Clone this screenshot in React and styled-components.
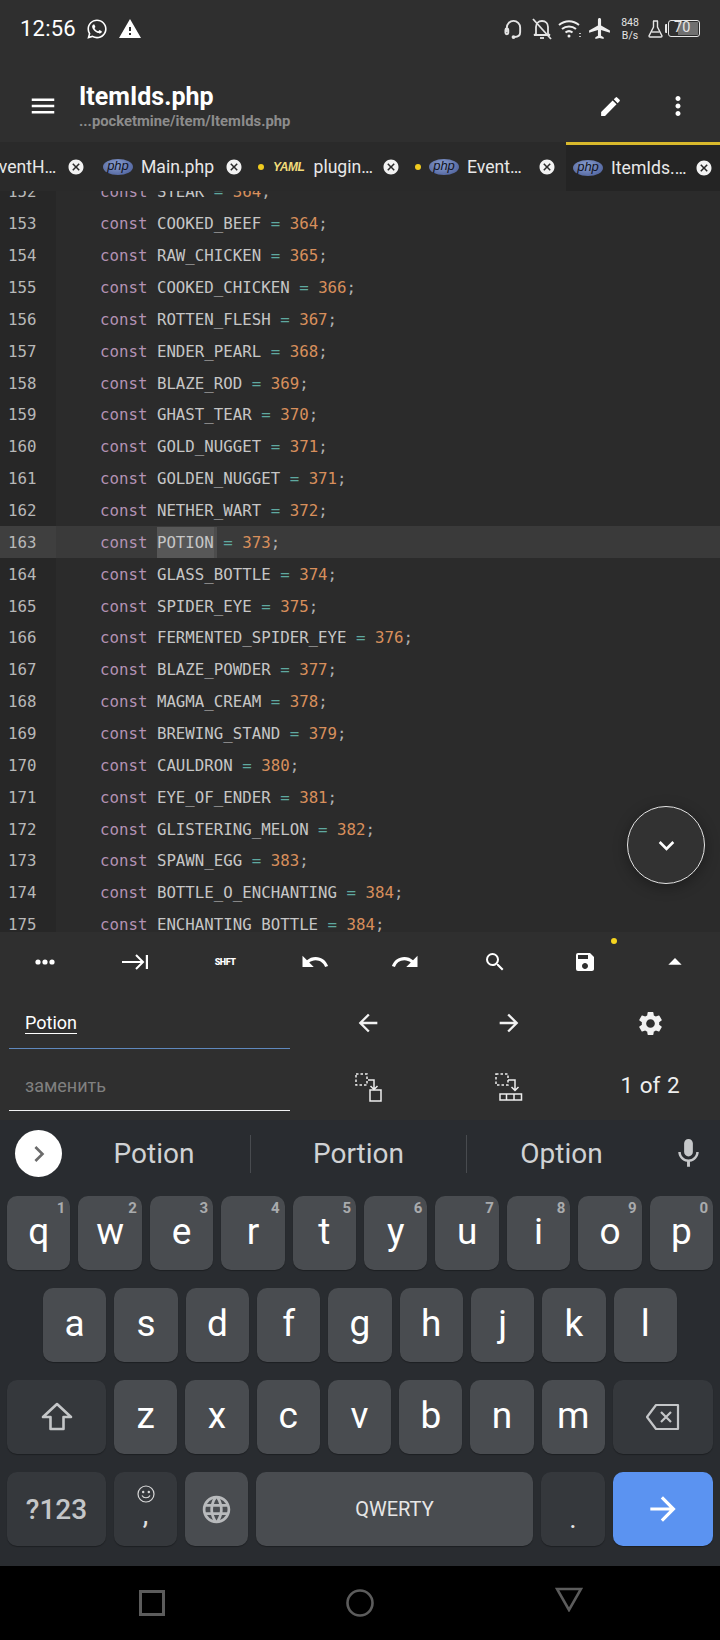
import React from "react";
import styled, { createGlobalStyle } from "styled-components";
import {
  MdMenu,
  MdEdit,
  MdMoreVert,
  MdUndo,
  MdRedo,
  MdSearch,
  MdSave,
  MdArrowDropUp,
  MdSettings,
  MdArrowBack,
  MdArrowForward,
  MdKeyboardArrowDown,
  MdKeyboardArrowRight,
  MdMic,
  MdLanguage,
  MdWarning,
  MdAirplanemodeActive,
  MdCancel,
} from "react-icons/md";
import { FaWhatsapp } from "react-icons/fa";

const GlobalStyle = createGlobalStyle`
  html, body {
    margin: 0;
    padding: 0;
    background: #2f2f2f;
  }
  * {
    box-sizing: border-box;
  }
`;

const Page = styled.div`
  position: relative;
  width: 720px;
  height: 1640px;
  overflow: hidden;
  display: flex;
  flex-direction: column;
  background: #2f2f2f;
  font-family: Roboto, sans-serif;
  color: #fff;
`;

const StatusBar = styled.div`
  height: 60px;
  display: flex;
  align-items: center;
  padding: 0 20px 3px 20px;
`;

const Time = styled.span`
  font-size: 22px;
  letter-spacing: 0.2px;
  margin-right: 10px;
`;

const AlertIcon = styled(MdWarning)`
  margin-left: 10px;
  font-size: 24px;
`;

const StatusRight = styled.div`
  margin-left: auto;
  display: flex;
  align-items: center;
`;

const StatusGlyph = styled.span`
  display: flex;
  margin-right: ${(p) => p.$after}px;
`;

const Speed = styled.div`
  width: 30px;
  margin: 0 3px;
  font-size: 10.5px;
  line-height: 13px;
  text-align: center;
  color: #e4e4e4;
`;

const Battery = styled.div`
  position: relative;
  width: 32px;
  height: 17px;
  margin-left: 1px;
  border: 1.5px solid #e6e6e6;
  border-radius: 3px;
  display: flex;
  justify-content: flex-end;
  padding: 1px;
`;

const BatteryFill = styled.div`
  width: 70%;
  background: #707070;
`;

const BatteryText = styled.span`
  position: absolute;
  left: 5px;
  top: -1px;
  font-size: 14.5px;
  line-height: 16px;
  color: #e6e6e6;
`;

const BatteryCap = styled.div`
  width: 2px;
  height: 9px;
  margin-left: 2px;
  background: #e6e6e6;
  border-radius: 1px 0 0 1px;
`;

const AppBar = styled.div`
  height: 82px;
  display: flex;
  align-items: center;
  padding: 10px 0 0 28px;
`;

const TitleBlock = styled.div`
  margin-left: 21px;
  display: flex;
  flex-direction: column;
`;

const Title = styled.div`
  font-size: 25px;
  font-weight: 700;
  line-height: 30px;
`;

const Path = styled.div`
  font-size: 14.8px;
  font-weight: 700;
  line-height: 18px;
  color: #8c8c8c;
`;

const AppActions = styled.div`
  margin-left: auto;
  display: flex;
  align-items: center;
  gap: 40px;
  padding-right: 27px;
`;

const TabStrip = styled.div`
  height: 49px;
  display: flex;
  background: #2a2a2a;
  overflow: hidden;
`;

const Tab = styled.div`
  flex: 0 0 ${(p) => p.$width}px;
  margin-left: ${(p) => p.$shift || 0}px;
  display: flex;
  align-items: center;
  gap: ${(p) => p.$gap || 8}px;
  padding-left: ${(p) => p.$left || 0}px;
  padding-right: ${(p) => p.$right || 5}px;
  background: ${(p) => (p.$active ? "#242424" : "transparent")};
  border-top: ${(p) => (p.$active ? "3px solid #d9b92c" : "none")};
`;

const TabName = styled.span`
  font-size: 17.6px;
  color: #e8e8e8;
  white-space: nowrap;
`;

const TabClose = styled(MdCancel)`
  margin-left: auto;
  font-size: 18px;
  color: #f2f2f2;
  flex-shrink: 0;
`;

const UnsavedDot = styled.span`
  width: 6px;
  height: 6px;
  border-radius: 50%;
  background: #f0cb1f;
  flex-shrink: 0;
`;

const PhpLogo = styled.span`
  width: 30px;
  height: 16px;
  border-radius: 50%;
  background: radial-gradient(ellipse at 45% 35%, #8a9fd0, #52659f 80%);
  color: #10121c;
  font: italic 400 13px/14px "Liberation Sans", sans-serif;
  text-align: center;
  flex-shrink: 0;
`;

const YamlLogo = styled.span`
  font: italic 700 12px/14px "Liberation Sans", sans-serif;
  letter-spacing: -0.4px;
  color: #f1dc7a;
  flex-shrink: 0;
`;

const CodeArea = styled.div`
  height: 741px;
  overflow: hidden;
  background: #2b2b2b;
  font-family: "DejaVu Sans Mono", monospace;
  font-size: 15.75px;
`;

const CodeLines = styled.div`
  margin-top: -15px;
`;

const Line = styled.div`
  height: 31.86px;
  display: flex;
  align-items: center;
  white-space: pre;
  background: ${(p) => (p.$current ? "#3a3a3a" : "transparent")};
`;

const LineNumber = styled.span`
  width: 56px;
  align-self: stretch;
  display: flex;
  align-items: center;
  padding-left: 8px;
  margin-right: 44px;
  color: #b8b8b8;
  background: ${(p) => (p.$current ? "#3f3f3f" : "#272727")};
`;

const Keyword = styled.span`
  color: #b492b4;
`;

const Name = styled.span`
  color: #c6c6c6;
`;

const Selected = styled.span`
  background: #575757;
  color: #c6c6c6;
  padding: 6px 0;
  box-shadow: 3px 0 0 #4c4c4c;
`;

const Op = styled.span`
  color: #5fa9a0;
`;

const Num = styled.span`
  color: #d88f5c;
`;

const Semi = styled.span`
  color: #b0b0b0;
`;

const ScrollButton = styled.div`
  position: absolute;
  left: 627px;
  top: 806px;
  width: 78px;
  height: 78px;
  border-radius: 50%;
  border: 1.5px solid #e4e4e4;
  background: #323232;
  box-shadow: 0 3px 14px rgba(0, 0, 0, 0.35);
  display: flex;
  align-items: center;
  justify-content: center;
  font-size: 31px;
`;

const ToolRow = styled.div`
  height: 60px;
  display: grid;
  grid-template-columns: repeat(8, 90px);
  background: #2f2f2f;
`;

const ToolCell = styled.div`
  position: relative;
  display: flex;
  align-items: center;
  justify-content: center;
  font-size: ${(p) => p.$size || 24}px;
  color: #fff;
`;

const ShiftLabel = styled.span`
  font-size: 9px;
  font-weight: 900;
  letter-spacing: -0.5px;
`;

const SaveDot = styled.span`
  position: absolute;
  right: 13px;
  top: 6px;
  width: 6px;
  height: 6px;
  border-radius: 50%;
  background: #f5d41f;
`;

const FindPanel = styled.div`
  height: 128px;
  display: grid;
  grid-template-columns: 298px 140px 142px 140px;
  grid-auto-rows: 62px;
`;

const FieldCell = styled.div`
  padding: 0 8px 0 9px;
`;

const Field = styled.div`
  height: 57px;
  padding: 6px 0 0 16px;
  display: flex;
  align-items: center;
  font-size: 18px;
  border-bottom: 1px solid ${(p) => (p.$focused ? "#5f88bd" : "#f2f2f2")};
  color: ${(p) => (p.$focused ? "#fff" : "#808080")};
`;

const TypedWord = styled.span`
  border-bottom: 1px solid #fff;
  line-height: 21px;
`;

const PanelCell = styled.div`
  display: flex;
  align-items: center;
  justify-content: center;
  font-size: ${(p) => p.$size || 24}px;
  padding-top: ${(p) => p.$drop || 0}px;
  color: #f2f2f2;
`;

const MatchCount = styled.span`
  font-size: 22.5px;
  word-spacing: 1px;
  color: #eee;
`;

const Keyboard = styled.div`
  height: 446px;
  background: #292c30;
  display: flex;
  flex-direction: column;
`;

const Suggestions = styled.div`
  height: 76px;
  padding-bottom: 9px;
  display: grid;
  grid-template-columns: 58px 192px 216px 190px 64px;
  align-items: center;
`;

const ExpandButton = styled.div`
  width: 47px;
  height: 47px;
  margin-left: 15px;
  border-radius: 50%;
  background: #fff;
  color: #6b6b6b;
  display: flex;
  align-items: center;
  justify-content: center;
  font-size: 32px;
`;

const Suggestion = styled.div`
  height: 38px;
  display: flex;
  align-items: center;
  justify-content: center;
  font-size: 28px;
  color: #d0d2d4;
  border-left: ${(p) => (p.$divided ? "1px solid #484b4f" : "none")};
`;

const MicCell = styled.div`
  display: flex;
  justify-content: center;
  font-size: 35px;
  color: #c6c8ca;
`;

const KeyRows = styled.div`
  display: flex;
  flex-direction: column;
  gap: 18px;
`;

const KeyRow = styled.div`
  height: 74px;
  display: flex;
  gap: 8px;
  padding: 0 ${(p) => p.$inset || 7}px;
`;

const Key = styled.div`
  position: relative;
  flex: ${(p) => (p.$wide ? `0 0 ${p.$wide}px` : "1 1 0")};
  border-radius: 10px;
  background: ${(p) => (p.$tone === "dark" ? "#35383c" : p.$tone === "blue" ? "#5b93f1" : "#494c50")};
  box-shadow: 0 1px 1px rgba(0, 0, 0, 0.3);
  display: flex;
  align-items: center;
  justify-content: center;
  font-size: 37px;
  color: #fff;
  padding-bottom: ${(p) => p.$lift || 0}px;
`;

const KeyHint = styled.span`
  position: absolute;
  right: 5px;
  top: 3px;
  font-size: 15px;
  font-weight: 700;
  color: #a9abad;
`;

const SymbolLabel = styled.span`
  font-size: 28px;
  font-weight: 500;
  color: #c4c6c8;
`;

const SpaceLabel = styled.span`
  font-size: 20px;
  color: #e6e6e6;
`;

const CommaStack = styled.div`
  display: flex;
  flex-direction: column;
  align-items: center;
  color: #e0e0e0;
  font-size: 28px;
  line-height: 24px;
  padding-bottom: 6px;
`;

const PeriodLabel = styled.span`
  font-size: 28px;
  color: #e6e6e6;
  padding-top: 18px;
`;

const NavBar = styled.div`
  flex: 1;
  background: #000;
  display: grid;
  grid-template-columns: repeat(3, 208.5px);
  justify-content: center;
  justify-items: center;
  align-items: center;
`;

const NavCell = styled.div`
  display: flex;
  margin-bottom: ${(p) => p.$raise || 0}px;
`;

const lines = [
  [152, "STEAK", 364],
  [153, "COOKED_BEEF", 364],
  [154, "RAW_CHICKEN", 365],
  [155, "COOKED_CHICKEN", 366],
  [156, "ROTTEN_FLESH", 367],
  [157, "ENDER_PEARL", 368],
  [158, "BLAZE_ROD", 369],
  [159, "GHAST_TEAR", 370],
  [160, "GOLD_NUGGET", 371],
  [161, "GOLDEN_NUGGET", 371],
  [162, "NETHER_WART", 372],
  [163, "POTION", 373],
  [164, "GLASS_BOTTLE", 374],
  [165, "SPIDER_EYE", 375],
  [166, "FERMENTED_SPIDER_EYE", 376],
  [167, "BLAZE_POWDER", 377],
  [168, "MAGMA_CREAM", 378],
  [169, "BREWING_STAND", 379],
  [170, "CAULDRON", 380],
  [171, "EYE_OF_ENDER", 381],
  [172, "GLISTERING_MELON", 382],
  [173, "SPAWN_EGG", 383],
  [174, "BOTTLE_O_ENCHANTING", 384],
  [175, "ENCHANTING_BOTTLE", 384],
];

const rowOne = [
  ["q", "1"],
  ["w", "2"],
  ["e", "3"],
  ["r", "4"],
  ["t", "5"],
  ["y", "6"],
  ["u", "7"],
  ["i", "8"],
  ["o", "9"],
  ["p", "0"],
];

const HeadsetIcon = () => (
  <svg width="19" height="21" viewBox="0 0 20 22" fill="none" stroke="#e4e4e4" strokeWidth="2">
    <path d="M3 15V10a7 7 0 0 1 14 0v5c0 3-2 5-6 5" />
    <rect x="1.5" y="11" width="3" height="6" rx="1.5" />
    <circle cx="10" cy="20" r="1" fill="#e4e4e4" />
  </svg>
);

const BellOffIcon = () => (
  <svg width="20" height="22" viewBox="0 0 20 22" fill="none" stroke="#e4e4e4" strokeWidth="1.8">
    <path d="M4 16V9c0-3 2-6 6-6s6 3 6 6v7l2 1H2z" />
    <path d="M8 20h4" />
    <path d="M1 1l18 20" />
  </svg>
);

const WifiIcon = () => (
  <svg width="24" height="20" viewBox="0 0 24 20" fill="none" stroke="#eee" strokeWidth="2">
    <path d="M1 6c6-5 14-5 20 0" />
    <path d="M4 10c4-3.500 10-3.500 14 0" />
    <path d="M7.500 13.500c2-1.600 5-1.600 7 0" />
    <circle cx="11" cy="17" r="1.500" fill="#eee" stroke="none" />
    <path d="M22 14v1M22 17v1" strokeWidth="1.500" />
  </svg>
);

const FlaskIcon = () => (
  <svg width="15" height="18" viewBox="0 0 15 18" fill="none" stroke="#e4e4e4" strokeWidth="1.400">
    <path d="M5 1h5M5.500 1v6L1 16c0 .6.400 1 1 1h11c.6 0 1-.4 1-1L9.500 7V1" />
    <path d="M3.500 12h8" />
  </svg>
);

const DotsIcon = () => (
  <svg width="20" height="6" viewBox="0 0 20 6" fill="#fff">
    <circle cx="3" cy="3" r="2.600" />
    <circle cx="10" cy="3" r="2.600" />
    <circle cx="17" cy="3" r="2.600" />
  </svg>
);

const TabEndIcon = () => (
  <svg width="26" height="16" viewBox="0 0 26 16" fill="none" stroke="#fff" strokeWidth="2">
    <path d="M0 8h21M14 1l7 7-7 7" />
    <path d="M25 1v14" strokeWidth="2.400" />
  </svg>
);

const ReplaceOneIcon = () => (
  <svg width="27" height="29" viewBox="0 0 27 29" fill="none" stroke="#ededed" strokeWidth="1.500">
    <path d="M1 1h11v11H1z" strokeDasharray="2.500 2" />
    <path d="M13 7h6v9M15.500 13l3.500 3.500 3.500-3.500" />
    <path d="M15 17h11v11H15z" />
  </svg>
);

const ReplaceAllIcon = () => (
  <svg width="28" height="28" viewBox="0 0 28 28" fill="none" stroke="#ededed" strokeWidth="1.500">
    <path d="M1 1h12v11H1z" strokeDasharray="2.500 2" />
    <path d="M13 7h7v10M16.500 14l3.500 3.500 3.500-3.500" />
    <path d="M5 21h6.500v6H5zM11.500 21H19v6h-7.500zM19 21h7.500v6H19z" />
  </svg>
);

const ShiftIcon = () => (
  <svg width="32" height="30" viewBox="0 0 32 30" fill="none" stroke="#c4c6c8" strokeWidth="2.600">
    <path d="M16 2L2 15h7.500v12h13V15H30z" strokeLinejoin="round" />
  </svg>
);

const BackspaceIcon = () => (
  <svg width="34" height="28" viewBox="0 0 34 28" fill="none" stroke="#c4c6c8" strokeWidth="2.200">
    <path d="M10 2h22v24H10L1 14z" strokeLinejoin="round" />
    <path d="M15 9l10 10M25 9L15 19" />
  </svg>
);

const SmileyIcon = () => (
  <svg width="18" height="18" viewBox="0 0 18 18" fill="none" stroke="#d8d8d8" strokeWidth="1.200">
    <circle cx="9" cy="9" r="8" />
    <circle cx="6.200" cy="7" r=".6" fill="#d8d8d8" />
    <circle cx="11.800" cy="7" r=".6" fill="#d8d8d8" />
    <path d="M5 10.500c1.500 3 6.500 3 8 0" />
  </svg>
);

const NavSquare = () => (
  <svg width="26" height="26" viewBox="0 0 26 26" fill="none" stroke="#5c5c5c" strokeWidth="3">
    <rect x="1.500" y="1.500" width="23" height="23" />
  </svg>
);

const NavCircle = () => (
  <svg width="28" height="28" viewBox="0 0 28 28" fill="none" stroke="#5c5c5c" strokeWidth="2.600">
    <circle cx="14" cy="14" r="12.500" />
  </svg>
);

const NavTriangle = () => (
  <svg width="28" height="25" viewBox="0 0 28 25" fill="none" stroke="#5c5c5c" strokeWidth="2.600">
    <path d="M2 2h24L14 23z" />
  </svg>
);

const App = () => (
  <>
    <GlobalStyle />
    <Page>
      <StatusBar>
        <Time>12:56</Time>
        <FaWhatsapp size={22} />
        <AlertIcon />
        <StatusRight>
          <StatusGlyph $after={9}>
            <HeadsetIcon />
          </StatusGlyph>
          <StatusGlyph $after={6}>
            <BellOffIcon />
          </StatusGlyph>
          <StatusGlyph $after={5}>
            <WifiIcon />
          </StatusGlyph>
          <StatusGlyph $after={0}>
            <MdAirplanemodeActive size={25} color="#eee" />
          </StatusGlyph>
          <Speed>
            848
            <br />
            B/s
          </Speed>
          <FlaskIcon />
          <BatteryCap />
          <Battery>
            <BatteryFill />
            <BatteryText>70</BatteryText>
          </Battery>
        </StatusRight>
      </StatusBar>

      <AppBar>
        <MdMenu size={30} />
        <TitleBlock>
          <Title>ItemIds.php</Title>
          <Path>...pocketmine/item/ItemIds.php</Path>
        </TitleBlock>
        <AppActions>
          <MdEdit size={25} />
          <MdMoreVert size={30} />
        </AppActions>
      </AppBar>

      <TabStrip>
        <Tab $width={103} $shift={-11} $right={7}>
          <TabName>EventH…</TabName>
          <TabClose />
        </Tab>
        <Tab $width={156} $left={11}>
          <PhpLogo>php</PhpLogo>
          <TabName>Main.php</TabName>
          <TabClose />
        </Tab>
        <Tab $width={156} $left={10} $gap={9}>
          <UnsavedDot />
          <YamlLogo>YAML</YamlLogo>
          <TabName>plugin…</TabName>
          <TabClose />
        </Tab>
        <Tab $width={161} $left={10} $right={10}>
          <UnsavedDot />
          <PhpLogo>php</PhpLogo>
          <TabName>Event…</TabName>
          <TabClose />
        </Tab>
        <Tab $width={155} $left={7} $right={9} $active>
          <PhpLogo>php</PhpLogo>
          <TabName>ItemIds.…</TabName>
          <TabClose />
        </Tab>
      </TabStrip>

      <CodeArea>
        <CodeLines>
          {lines.map(([no, name, value]) => (
            <Line key={no} $current={no === 163}>
              <LineNumber $current={no === 163}>{no}</LineNumber>
              <Keyword>const </Keyword>
              {no === 163 ? <Selected>{name}</Selected> : <Name>{name}</Name>}
              <Op> = </Op>
              <Num>{value}</Num>
              <Semi>;</Semi>
            </Line>
          ))}
        </CodeLines>
      </CodeArea>

      <ScrollButton>
        <MdKeyboardArrowDown />
      </ScrollButton>

      <ToolRow>
        <ToolCell>
          <DotsIcon />
        </ToolCell>
        <ToolCell>
          <TabEndIcon />
        </ToolCell>
        <ToolCell>
          <ShiftLabel>SHFT</ShiftLabel>
        </ToolCell>
        <ToolCell $size={30}>
          <MdUndo />
        </ToolCell>
        <ToolCell $size={30}>
          <MdRedo />
        </ToolCell>
        <ToolCell $size={24}>
          <MdSearch />
        </ToolCell>
        <ToolCell $size={24}>
          <MdSave />
          <SaveDot />
        </ToolCell>
        <ToolCell $size={32}>
          <MdArrowDropUp />
        </ToolCell>
      </ToolRow>

      <FindPanel>
        <FieldCell>
          <Field $focused>
            <TypedWord>Potion</TypedWord>
          </Field>
        </FieldCell>
        <PanelCell $size={28}>
          <MdArrowBack />
        </PanelCell>
        <PanelCell $size={28}>
          <MdArrowForward />
        </PanelCell>
        <PanelCell $size={29}>
          <MdSettings />
        </PanelCell>
        <FieldCell>
          <Field>заменить</Field>
        </FieldCell>
        <PanelCell $drop={4}>
          <ReplaceOneIcon />
        </PanelCell>
        <PanelCell $drop={4}>
          <ReplaceAllIcon />
        </PanelCell>
        <PanelCell>
          <MatchCount>1 of 2</MatchCount>
        </PanelCell>
      </FindPanel>

      <Keyboard>
        <Suggestions>
          <ExpandButton>
            <MdKeyboardArrowRight />
          </ExpandButton>
          <Suggestion>Potion</Suggestion>
          <Suggestion $divided>Portion</Suggestion>
          <Suggestion $divided>Option</Suggestion>
          <MicCell>
            <MdMic />
          </MicCell>
        </Suggestions>

        <KeyRows>
          <KeyRow>
            {rowOne.map(([letter, hint]) => (
              <Key key={letter} $lift={3}>
                {letter}
                <KeyHint>{hint}</KeyHint>
              </Key>
            ))}
          </KeyRow>
          <KeyRow $inset={43}>
            {["a", "s", "d", "f", "g", "h", "j", "k", "l"].map((letter) => (
              <Key key={letter} $lift={4}>
                {letter}
              </Key>
            ))}
          </KeyRow>
          <KeyRow>
            <Key $wide={99} $tone="dark">
              <ShiftIcon />
            </Key>
            {["z", "x", "c", "v", "b", "n", "m"].map((letter) => (
              <Key key={letter} $lift={3}>
                {letter}
              </Key>
            ))}
            <Key $wide={100} $tone="dark">
              <BackspaceIcon />
            </Key>
          </KeyRow>
          <KeyRow>
            <Key $wide={99} $tone="dark">
              <SymbolLabel>?123</SymbolLabel>
            </Key>
            <Key $wide={63} $tone="dark">
              <CommaStack>
                <SmileyIcon />
                <span>,</span>
              </CommaStack>
            </Key>
            <Key $wide={63}>
              <MdLanguage size={33} color="#b8babc" />
            </Key>
            <Key>
              <SpaceLabel>QWERTY</SpaceLabel>
            </Key>
            <Key $wide={64} $tone="dark">
              <PeriodLabel>.</PeriodLabel>
            </Key>
            <Key $wide={100} $tone="blue">
              <MdArrowForward size={38} />
            </Key>
          </KeyRow>
        </KeyRows>
      </Keyboard>

      <NavBar>
        <NavCell>
          <NavSquare />
        </NavCell>
        <NavCell>
          <NavCircle />
        </NavCell>
        <NavCell $raise={7}>
          <NavTriangle />
        </NavCell>
      </NavBar>
    </Page>
  </>
);

export default App;
